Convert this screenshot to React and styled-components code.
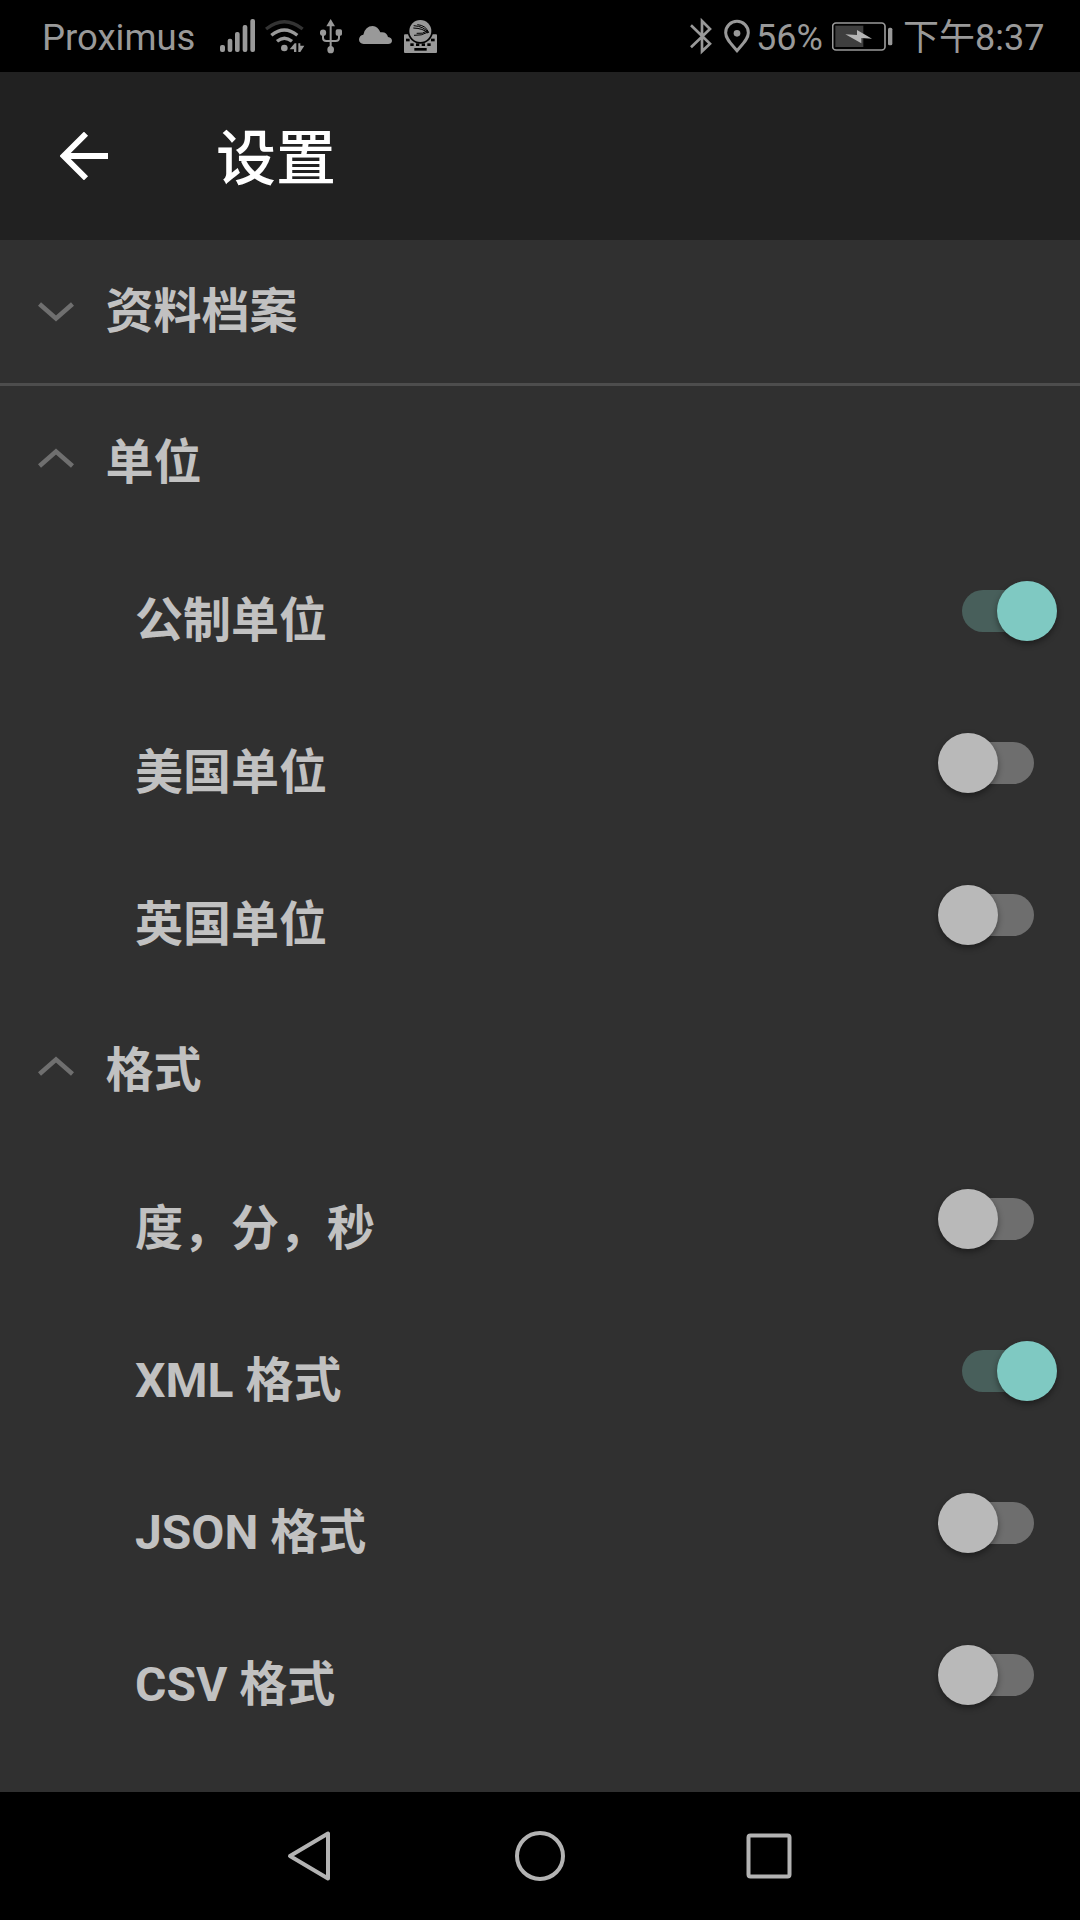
import { useState } from "react";
import styled, { createGlobalStyle } from "styled-components";

const unitItems = [
  { id: "metric", label: "公制单位" },
  { id: "us", label: "美国单位" },
  { id: "uk", label: "英国单位" },
];

const formatItems = [
  { id: "dms", label: "度，分，秒" },
  { id: "xml", label: "XML 格式" },
  { id: "json", label: "JSON 格式" },
  { id: "csv", label: "CSV 格式" },
];

const SignalIcon = () => (
  <Glyph width="35" viewBox="60 0 105 216">
    <rect x="60" y="135" width="15" height="21" rx="6" />
    <rect x="83" y="116" width="14" height="40" rx="6" />
    <rect x="105" y="96" width="14" height="60" rx="6" />
    <rect x="128" y="75" width="14" height="81" rx="6" />
    <rect x="151" y="57" width="14" height="99" rx="6" />
  </Glyph>
);

const WifiIcon = () => (
  <Glyph width="40" viewBox="194 0 120 216">
    <g fill="none" strokeWidth="10">
      <path d="M197 87Q252 43 307 87" stroke="#333" />
      <path d="M213 106Q252 74 291 106" stroke="#999" />
      <path d="M230 124Q252 105 275 124" stroke="#999" />
    </g>
    <circle cx="252" cy="144" r="10" />
    <path d="M268 148L283 130H288V156H281V148Z" />
    <path d="M294 130H300V137H312L300 156H294Z" />
  </Glyph>
);

const UsbIcon = () => (
  <Glyph width="22" viewBox="359 0 66 216">
    <path d="M391 57L404 79H378Z" />
    <circle cx="368" cy="98" r="9.5" />
    <rect x="406" y="88" width="19" height="19" rx="5" />
    <ellipse cx="391" cy="149" rx="10" ry="11" />
    <path
      d="M391 75V145M368 100V114Q368 123 378 123H406Q416 123 416 114V100"
      fill="none"
      stroke="#999"
      strokeWidth="6"
    />
  </Glyph>
);

const CloudIcon = () => (
  <Glyph width="33" viewBox="477 0 99 216">
    <path d="M491 132Q477 131 477 118Q478 106 490 104Q496 78 518 78Q534 79 541 97Q560 94 564 111Q576 113 576 123Q575 132 564 132Z" />
  </Glyph>
);

const KeyboardIcon = () => (
  <Glyph width="33" viewBox="612 0 99 216">
    <rect x="612" y="103" width="99" height="56" rx="3" />
    <circle cx="661" cy="93" r="38" fill="#000" />
    <circle cx="661" cy="93" r="33" />
    <g fill="#000">
      <rect x="618" y="116" width="11" height="8" />
      <rect x="693" y="116" width="11" height="8" />
      <rect x="631" y="130" width="10" height="8" />
      <rect x="648" y="130" width="10" height="8" />
      <rect x="665" y="130" width="10" height="8" />
      <rect x="682" y="130" width="10" height="8" />
      <rect x="643" y="144" width="37" height="8" />
    </g>
    <g fill="none" stroke="#000" strokeWidth="3">
      <path d="M652 74Q678 76 686 98" />
      <path d="M641 77Q672 79 685 98" />
      <path d="M640 84Q670 85 683 99" />
      <path d="M642 106Q664 108 685 96" />
      <path d="M650 100Q668 103 683 92" />
    </g>
  </Glyph>
);

const BluetoothIcon = () => (
  <Glyph width="22" viewBox="62 0 66 216">
    <path
      d="M65 76L122 131L98 154V63L122 87L65 142"
      fill="none"
      stroke="#999"
      strokeWidth="8"
    />
  </Glyph>
);

const PinIcon = () => (
  <Glyph width="26" viewBox="162 0 78 216">
    <path
      d="M201 152C184 132 167 117 167 98A34 34 0 0 1 235 98C235 117 218 132 201 152Z"
      fill="none"
      stroke="#999"
      strokeWidth="9"
    />
    <circle cx="201" cy="100" r="10" />
  </Glyph>
);

const BatteryIcon = () => (
  <Glyph width="61" viewBox="36 0 183 216">
    <rect x="38" y="69" width="157" height="81" rx="10" fill="none" stroke="#999" strokeWidth="5" />
    <rect x="46" y="77" width="84" height="64" fill="#3e3e3e" />
    <rect x="204" y="83" width="13" height="53" rx="5" />
    <path d="M76 103L111 105V90L156 116L124 114V130Z" fill="#b5b5b5" />
  </Glyph>
);

const BackIcon = () => (
  <svg width="48" height="48" viewBox="0 0 48 48">
    <path d="M26 1.7L3.7 24L26 46.3M3.7 24H48" fill="none" stroke="#fff" strokeWidth="5.8" />
  </svg>
);

const Chevron = ({ open }) => (
  <ChevronSvg viewBox="0 0 36 20" $open={open}>
    <path d="M1.5 2L18 16.5L34.5 2" fill="none" stroke="#6f6f6f" strokeWidth="4.6" />
  </ChevronSvg>
);

const SettingItem = ({ label, on, onToggle }) => (
  <Item>
    <ItemLabel>{label}</ItemLabel>
    <Switch role="switch" aria-checked={on} aria-label={label} onClick={onToggle}>
      <Track $on={on} />
      <Thumb $on={on} />
    </Switch>
  </Item>
);

export default function App() {
  const [enabled, setEnabled] = useState({ metric: true, xml: true });

  const toggle = (id) => {
    setEnabled((prev) => ({ ...prev, [id]: !prev[id] }));
  };

  const renderItems = (items) =>
    items.map(({ id, label }) => (
      <SettingItem key={id} label={label} on={!!enabled[id]} onToggle={() => toggle(id)} />
    ));

  return (
    <Screen>
      <GlobalStyle />
      <StatusBar>
        <StatusLeft>
          <Carrier>Proximus</Carrier>
          <SignalIcon />
          <WifiIcon />
          <UsbIcon />
          <CloudIcon />
          <KeyboardIcon />
        </StatusLeft>
        <StatusRight>
          <BluetoothIcon />
          <PinIcon />
          <Percent>56%</Percent>
          <BatteryIcon />
          <Time>下午8:37</Time>
        </StatusRight>
      </StatusBar>
      <Header>
        <BackButton aria-label="返回">
          <BackIcon />
        </BackButton>
        <Title>设置</Title>
      </Header>
      <Content>
        <Section $divided>
          <Chevron />
          <SectionTitle>资料档案</SectionTitle>
        </Section>
        <Section>
          <Chevron open />
          <SectionTitle>单位</SectionTitle>
        </Section>
        {renderItems(unitItems)}
        <Section>
          <Chevron open />
          <SectionTitle>格式</SectionTitle>
        </Section>
        {renderItems(formatItems)}
      </Content>
      <NavBar>
        <svg width="50" height="54" viewBox="0 0 50 54">
          <path d="M42 4.5V49.5L4 27Z" fill="none" stroke="#b3b3b3" strokeWidth="4" strokeLinejoin="round" />
        </svg>
        <svg width="50" height="54" viewBox="0 0 50 54">
          <circle cx="25" cy="27" r="23" fill="none" stroke="#b3b3b3" strokeWidth="4" />
        </svg>
        <svg width="50" height="54" viewBox="0 0 50 54">
          <rect x="4.5" y="6.5" width="41" height="41" rx="2" fill="none" stroke="#b3b3b3" strokeWidth="4" />
        </svg>
      </NavBar>
    </Screen>
  );
}

const GlobalStyle = createGlobalStyle`
  * {
    box-sizing: border-box;
  }
  body {
    margin: 0;
    background: #303030;
    font-family: Roboto, "Noto Sans CJK SC", sans-serif;
  }
  button {
    border: none;
    padding: 0;
    background: none;
    cursor: pointer;
  }
  svg {
    display: block;
    flex-shrink: 0;
  }
`;

const Screen = styled.div`
  display: flex;
  flex-direction: column;
  width: 1080px;
  height: 1920px;
  overflow: hidden;
  background: #303030;
`;

const StatusBar = styled.div`
  display: flex;
  justify-content: space-between;
  height: 72px;
  padding: 0 36px 0 42px;
  background: #000;
  color: #999;
  font-size: 36px;
  line-height: 76px;
  white-space: nowrap;
`;
const StatusLeft = styled.div`
  display: flex;
  svg + svg {
    margin-left: 10px;
  }
  svg:nth-of-type(3) {
    margin-left: 15px;
  }
  svg:nth-of-type(4) {
    margin-left: 17px;
  }
  svg:nth-of-type(5) {
    margin-left: 12px;
  }
`;
const StatusRight = styled.div`
  display: flex;
  svg + svg {
    margin-left: 12px;
  }
`;
const Glyph = styled.svg`
  height: 72px;
  fill: #999;
`;
const Carrier = styled.div`
  width: 178px;
  font-size: 36.5px;
`;
const Percent = styled.div`
  width: 76px;
  margin-left: 6px;
`;
const Time = styled.div`
  width: 141px;
  margin-left: 10px;
`;

const Header = styled.header`
  display: flex;
  align-items: center;
  height: 168px;
  padding-left: 60px;
  background: #212121;
`;
const BackButton = styled.button`
  width: 48px;
  height: 48px;
`;
const Title = styled.h1`
  margin: 8px 0 0 108px;
  color: #fff;
  font-size: 60px;
  font-weight: 500;
  line-height: 80px;
`;

const Content = styled.main`
  flex: 1;
`;
const Section = styled.div`
  display: flex;
  align-items: center;
  height: ${({ $divided }) => ($divided ? "146px" : "152px")};
  padding-top: ${({ $divided }) => ($divided ? "0" : "2px")};
  padding-left: 38px;
  border-bottom: ${({ $divided }) => ($divided ? "3px solid #4d4d4d" : "none")};
`;
const ChevronSvg = styled.svg`
  width: 36px;
  height: 20px;
  margin-bottom: ${({ $open }) => ($open ? "10px" : "0")};
  transform: ${({ $open }) => ($open ? "scaleY(-1)" : "none")};
`;
const SectionTitle = styled.h2`
  margin: 0 0 0 31.5px;
  color: #c1c1c1;
  font-size: 48px;
  font-weight: 700;
  line-height: 72px;
`;

const Item = styled.div`
  display: flex;
  align-items: center;
  justify-content: space-between;
  height: 152px;
  padding: 0 22px 6px 135px;
`;
const ItemLabel = styled.span`
  padding-top: 20px;
  color: #c1c1c1;
  font-size: 48px;
  font-weight: 700;
  line-height: 72px;
`;
const Switch = styled.button`
  position: relative;
  width: 120px;
  height: 60px;
`;
const Track = styled.span`
  display: block;
  width: 72px;
  height: 42px;
  margin: 0 auto;
  border-radius: 21px;
  background: ${({ $on }) => ($on ? "#485f5b" : "#6e6e6e")};
`;
const Thumb = styled.span`
  position: absolute;
  top: 0;
  left: ${({ $on }) => ($on ? "59px" : "0")};
  width: 60px;
  height: 60px;
  border-radius: 50%;
  background: ${({ $on }) => ($on ? "#7fc9c2" : "#b9b9b9")};
  box-shadow: 0 3px 6px rgba(0, 0, 0, 0.4);
`;

const NavBar = styled.nav`
  display: flex;
  justify-content: center;
  align-items: center;
  gap: 179px;
  height: 128px;
  background: #000;
`;
